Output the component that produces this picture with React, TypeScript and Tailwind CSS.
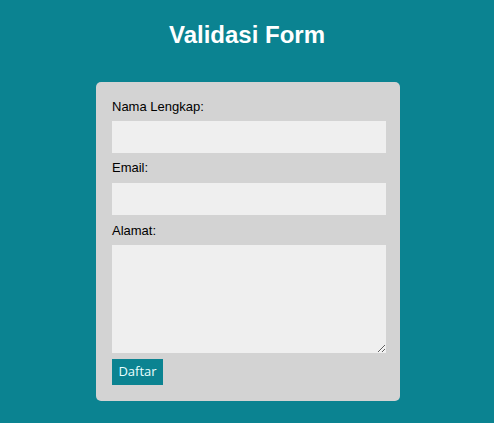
import React from "react";

export default function App() {
  return (
    <div
      className="min-h-screen w-full bg-[#0b8391] pt-[21px]"
      style={{ fontFamily: '"Liberation Sans", Arial, sans-serif' }}
    >
      <h1 className="m-0 text-center text-[24px] font-bold leading-[28px] text-white">
        Validasi Form
      </h1>
      <form
        className="ml-[96px] mt-[33px] flex w-[304px] flex-col rounded-[5px] bg-[#d3d3d3] pl-4 pr-[14px] pt-[17px] pb-4"
        onSubmit={(e) => e.preventDefault()}
      >
        <label className="block text-[13px] leading-[15px] text-black">Nama Lengkap:</label>
        <input
          type="text"
          className="mt-[7px] block h-[32px] w-[274px] border-0 bg-[#efefef] px-2 outline-none"
        />
        <label className="mt-[7px] block text-[13px] leading-[15px] text-black">Email:</label>
        <input
          type="email"
          className="mt-[8px] block h-[32px] w-[274px] border-0 bg-[#efefef] px-2 outline-none"
        />
        <label className="mt-[8px] block text-[13px] leading-[15px] text-black">Alamat:</label>
        <textarea className="mt-[7px] block h-[108px] w-[274px] border-0 bg-[#efefef] p-2 outline-none" />
        <div className="mt-[6px] flex">
          <button
            type="submit"
            className="h-[26px] w-[51px] bg-[#0b8391] text-[13px] text-[#eaffff]"
            style={{ fontFamily: '"Open Sans", "Noto Sans", sans-serif' }}
          >
            Daftar
          </button>
        </div>
      </form>
    </div>
  );
}
